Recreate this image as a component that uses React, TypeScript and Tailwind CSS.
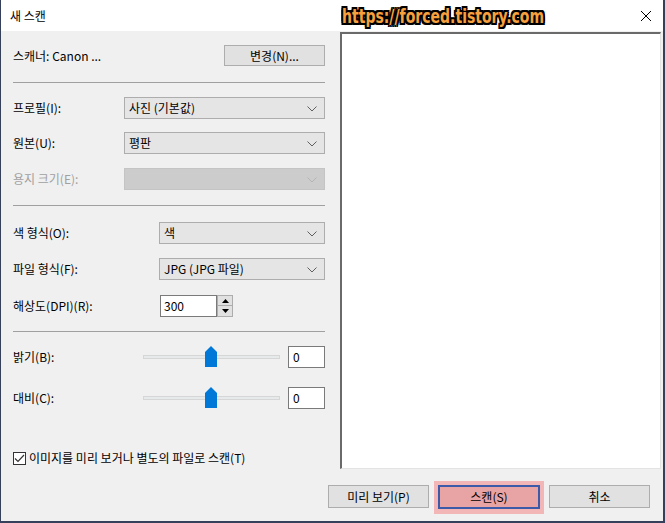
import React from 'react';

const font = { fontFamily: '"Noto Sans CJK KR", "Noto Sans", sans-serif' };

function Chevron({ color = '#606060' }: { color?: string }) {
  return (
    <svg width="10" height="6" viewBox="0 0 10 6" className="absolute right-[7px] top-[8px]">
      <path d="M0.5 0.5 L5 5 L9.5 0.5" fill="none" stroke={color} strokeWidth="1" />
    </svg>
  );
}

function Select({ value, disabled, width }: { value?: string; disabled?: boolean; width: string }) {
  return (
    <div
      className={`relative h-[22px] border ${width} ${
        disabled ? 'border-[#c4c4c4] bg-[#cccccc]' : 'border-[#adadad] bg-[#e5e5e5]'
      }`}
    >
      <span className="absolute left-[4px] top-[2px] text-[12px] leading-[16px] text-black">{value}</span>
      <Chevron color={disabled ? '#b4b4b4' : '#606060'} />
    </div>
  );
}

function Slider() {
  return (
    <div className="relative w-[137px] h-[20px]">
      <div className="absolute left-0 right-0 top-[8px] h-[4px] bg-[#e7eaea] border border-[#d6d6d6]" />
      <svg width="12" height="21" viewBox="0 0 12 21" className="absolute left-[62px] top-[-1px]">
        <path d="M0 6 L6 0 L12 6 L12 21 L0 21 Z" fill="#0078d7" />
      </svg>
    </div>
  );
}

function NumBox() {
  return (
    <div className="w-[37px] h-[22px] border border-[#7a7a7a] bg-white text-[12px] leading-[20px] pl-[4px]">0</div>
  );
}

function Label({ children, disabled }: { children: React.ReactNode; disabled?: boolean }) {
  return (
    <span className={`text-[12px] leading-[16px] ${disabled ? 'text-[#a0a0a0]' : 'text-black'}`}>{children}</span>
  );
}

function Sep() {
  return <div className="h-px bg-[#a0a0a0] mr-[15px]" />;
}

function Btn({ children, h = 'h-[23px]' }: { children: React.ReactNode; h?: string }) {
  return (
    <div className={`w-[101px] ${h} bg-[#e1e1e1] border border-[#adadad] flex items-center justify-center text-[12px] text-black`}>
      {children}
    </div>
  );
}

export default function App() {
  return (
    <div
      className="w-[665px] h-[523px] bg-[#f0f0f0] border-l border-r-[2px] border-b-[2px] border-[#36405a] flex flex-col overflow-hidden text-[12px] leading-[16px]"
      style={font}
    >
      {/* Title bar */}
      <div className="h-[31px] bg-white flex items-center pl-[9px] shrink-0">
        <span className="text-[12px] text-black w-[332px] shrink-0">새 스캔</span>
        <div className="w-[210px] shrink-0 flex">
          <span
            className="inline-block text-[19px] leading-[24px] font-bold text-[#f7a13e] scale-x-[0.82] origin-left whitespace-nowrap"
            style={{
              fontFamily: '"DejaVu Sans Condensed", "DejaVu Sans", sans-serif',
              textShadow:
                '2px 0 0 #000, -2px 0 0 #000, 0 2px 0 #000, 0 -2px 0 #000, 2px 2px 0 #000, -2px -2px 0 #000, 2px -2px 0 #000, -2px 2px 0 #000',
            }}
          >
            https://forced.tistory.com
          </span>
        </div>
        <div className="flex-1" />
        <svg width="12" height="12" viewBox="0 0 12 12" className="mr-[11px]">
          <path d="M1 1 L11 11 M11 1 L1 11" stroke="#000" strokeWidth="1" />
        </svg>
      </div>

      <div className="flex flex-1">
        {/* Left settings column */}
        <div className="w-[339px] pl-[12px] flex flex-col">
          <div className="mt-[14px] flex items-center justify-between pr-[15px]">
            <Label>스캐너: Canon ...</Label>
            <Btn h="h-[21px]">변경(N)...</Btn>
          </div>
          <div className="mt-[16px]"><Sep /></div>

          <div className="mt-[14px] flex items-center justify-between pr-[15px]">
            <Label>프로필(I):</Label>
            <Select value="사진 (기본값)" width="w-[201px]" />
          </div>
          <div className="mt-[13px] flex items-center justify-between pr-[15px]">
            <Label>원본(U):</Label>
            <Select value="평판" width="w-[201px]" />
          </div>
          <div className="mt-[14px] flex items-center justify-between pr-[15px]">
            <Label disabled>용지 크기(E):</Label>
            <Select disabled width="w-[201px]" />
          </div>
          <div className="mt-[15px]"><Sep /></div>

          <div className="mt-[16px] flex items-center justify-between pr-[15px]">
            <Label>색 형식(O):</Label>
            <Select value="색" width="w-[166px]" />
          </div>
          <div className="mt-[14px] flex items-center justify-between pr-[15px]">
            <Label>파일 형식(F):</Label>
            <Select value="JPG (JPG 파일)" width="w-[166px]" />
          </div>
          <div className="mt-[15px] flex items-center pr-[15px]">
            <div className="w-[147px] flex"><Label>해상도(DPI)(R):</Label></div>
            <div className="w-[57px] h-[22px] border border-[#7a7a7a] bg-white text-[12px] leading-[20px] pl-[3px]">300</div>
            <div className="flex flex-col">
              <div className="w-[16px] h-[11px] bg-[#e1e1e1] border border-[#adadad] flex items-center justify-center">
                <svg width="7" height="4" viewBox="0 0 7 4"><path d="M0 4 L3.5 0 L7 4 Z" fill="#000" /></svg>
              </div>
              <div className="w-[16px] h-[11px] bg-[#e1e1e1] border border-[#adadad] border-t-0 flex items-center justify-center">
                <svg width="7" height="4" viewBox="0 0 7 4"><path d="M0 0 L3.5 4 L7 0 Z" fill="#000" /></svg>
              </div>
            </div>
          </div>
          <div className="mt-[14px]"><Sep /></div>

          <div className="mt-[14px] flex items-center pr-[15px]">
            <div className="w-[130px] flex"><Label>밝기(B):</Label></div>
            <Slider />
            <div className="ml-[8px] flex"><NumBox /></div>
          </div>
          <div className="mt-[19px] flex items-center pr-[15px]">
            <div className="w-[130px] flex"><Label>대비(C):</Label></div>
            <Slider />
            <div className="ml-[8px] flex"><NumBox /></div>
          </div>

          <div className="mt-[41px] flex items-center gap-[3px]">
            <div className="w-[13px] h-[13px] border border-[#333] bg-white flex items-center justify-center">
              <svg width="11" height="9" viewBox="0 0 11 9">
                <path d="M1 4.5 L4 7.5 L10 1" fill="none" stroke="#333" strokeWidth="1.2" />
              </svg>
            </div>
            <Label>이미지를 미리 보거나 별도의 파일로 스캔(T)</Label>
          </div>
        </div>

        {/* Preview area */}
        <div className="mt-px w-[321px] h-[437px] bg-white border-t-2 border-l-2 border-t-[#6a6a6a] border-l-[#6a6a6a] border-r border-b border-r-[#e3e3e3] border-b-[#e3e3e3]" />
      </div>

      {/* Bottom buttons */}
      <div className="h-[52px] shrink-0 flex items-start pl-[327px] gap-[5px]">
        <div className="mt-[16px] flex"><Btn>미리 보기(P)</Btn></div>
        <div className="mt-[12px] pt-[4px] pb-[5px] px-[4px] bg-[#f2b6b6]">
          <div className="w-[102px] h-[24px] bg-[#e8a4a4] border-2 border-[#3d5aa8] flex items-center justify-center text-[12px] text-black">
            스캔(S)
          </div>
        </div>
        <div className="mt-[16px] flex"><Btn>취소</Btn></div>
      </div>
    </div>
  );
}
